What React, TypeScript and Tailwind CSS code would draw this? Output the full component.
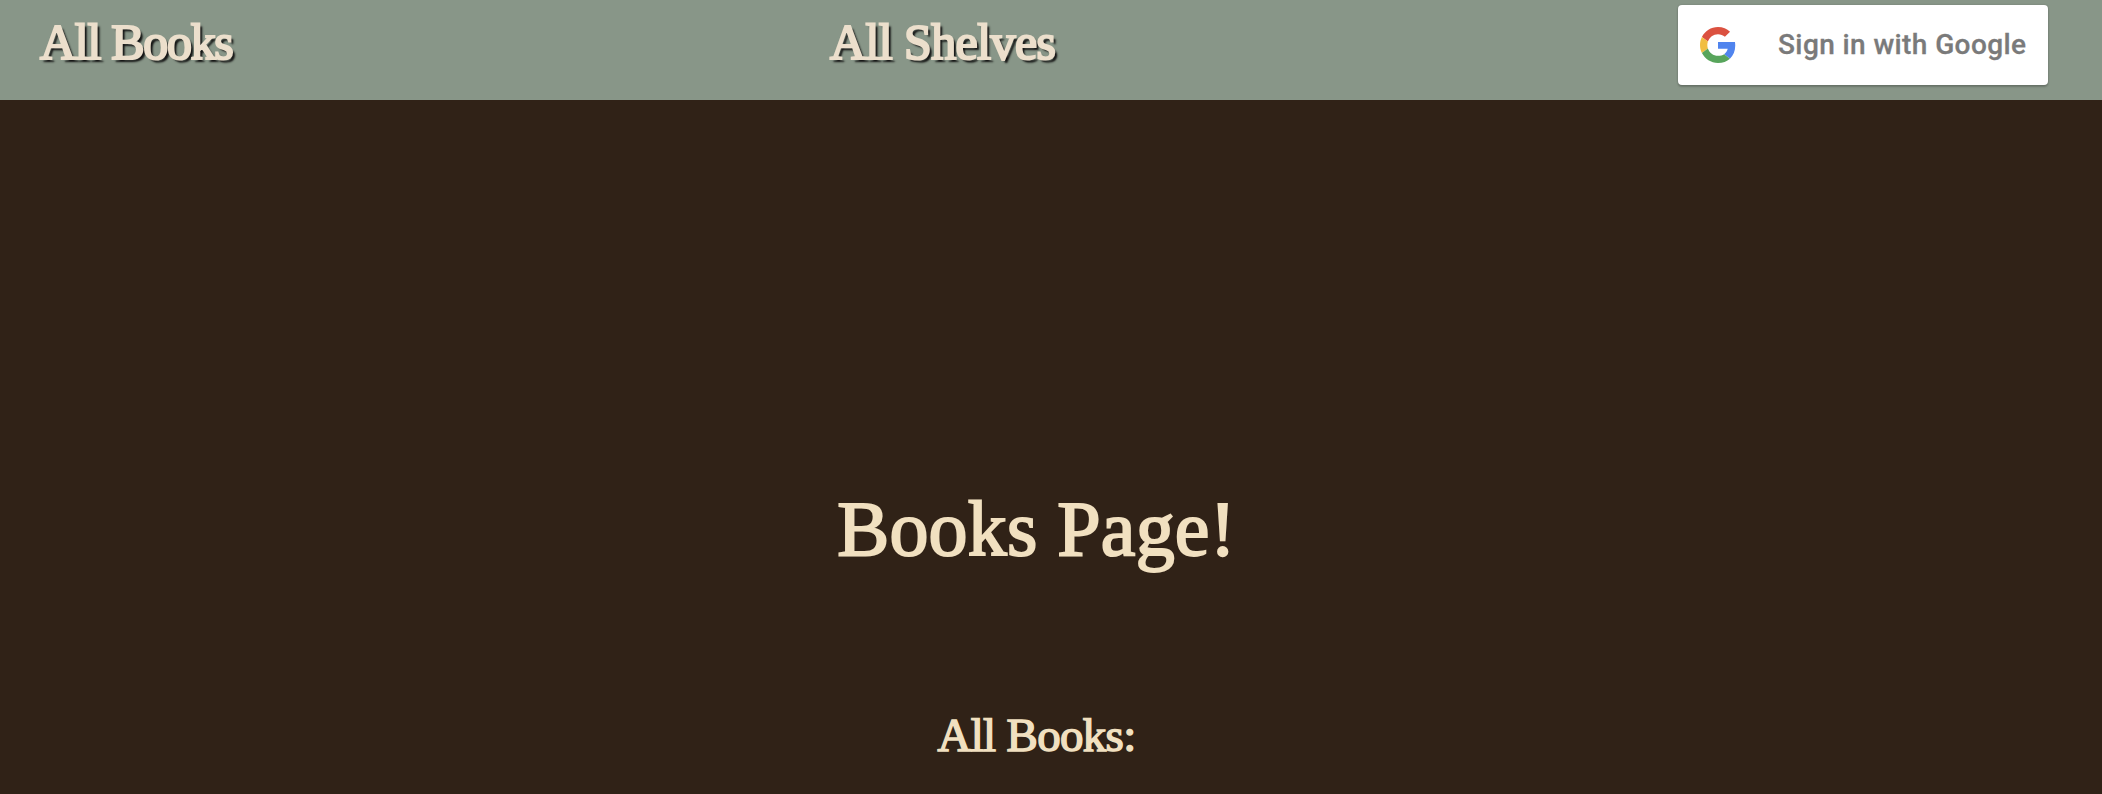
function NavLink({ label, className }: { label: string; className: string }) {
  return (
    <a
      href="#"
      className={`block whitespace-nowrap text-[50px] leading-[58px] text-[#ecdfcc] [text-shadow:3px_3px_2px_#111] [-webkit-text-stroke:2.2px_#ecdfcc] ${className}`}
    >
      {label}
    </a>
  );
}

function GoogleLogo() {
  return (
    <svg viewBox="0 0 48 48" className="size-[36px]" aria-hidden="true">
      <path fill="#DB5140" d="M24 9.5c3.54 0 6.71 1.22 9.21 3.6l6.85-6.85C35.9 2.38 30.47 0 24 0 14.62 0 6.51 5.38 2.56 13.22l7.98 6.19C12.43 13.72 17.74 9.5 24 9.5z" />
      <path fill="#5084EE" d="M46.98 24.55c0-1.57-.15-3.09-.38-4.55H24v9.02h12.94c-.58 2.96-2.26 5.48-4.78 7.18l7.73 6c4.51-4.18 7.09-10.36 7.09-17.65z" />
      <path fill="#F1BE42" d="M10.53 28.59c-.48-1.45-.76-2.99-.76-4.59s.27-3.14.76-4.59l-7.98-6.19C.92 16.46 0 20.12 0 24c0 3.88.92 7.54 2.56 10.78l7.97-6.19z" />
      <path fill="#58A55C" d="M24 48c6.48 0 11.93-2.13 15.89-5.81l-7.73-6c-2.15 1.45-4.92 2.3-8.16 2.3-6.26 0-11.57-4.22-13.47-9.91l-7.98 6.19C6.51 42.62 14.62 48 24 48z" />
    </svg>
  );
}

export default function App() {
  return (
    <div className="flex h-[794px] flex-col overflow-hidden bg-[#302217] font-['Liberation_Serif',serif]">
      <header className="grid h-[100px] shrink-0 grid-cols-[830px_848px_370px] items-start bg-[#889688]">
        <NavLink label="All Books" className="pt-[13px] pl-10 tracking-[-1.3px]" />
        <NavLink label="All Shelves" className="pt-[13px] tracking-[-0.6px]" />
        <button className="mt-[5px] flex h-[80px] items-center rounded-[4px] bg-white pl-[22px] text-[28px] font-medium text-[#7a7a7a] shadow-[0_2px_2px_rgba(0,0,0,0.2),0_0_2px_rgba(0,0,0,0.2)]">
          <GoogleLogo />
          <span className="ml-[42px] whitespace-nowrap font-['Roboto',sans-serif] tracking-[0.4px] [-webkit-text-stroke:0.3px_#7a7a7a]">Sign in with Google</span>
        </button>
      </header>
      <main className="flex grow flex-col items-center pr-[29px] text-[#f1e0c0]">
        <h1 className="mt-[384px] text-[78px] leading-[90px] tracking-[0.2px] [-webkit-text-stroke:2px_#f1e0c0]">Books Page!</h1>
        <h2 className="mt-[134px] text-[47px] leading-[54px] tracking-[-0.7px] [-webkit-text-stroke:1.5px_#f1e0c0]">All Books:</h2>
      </main>
    </div>
  );
}
